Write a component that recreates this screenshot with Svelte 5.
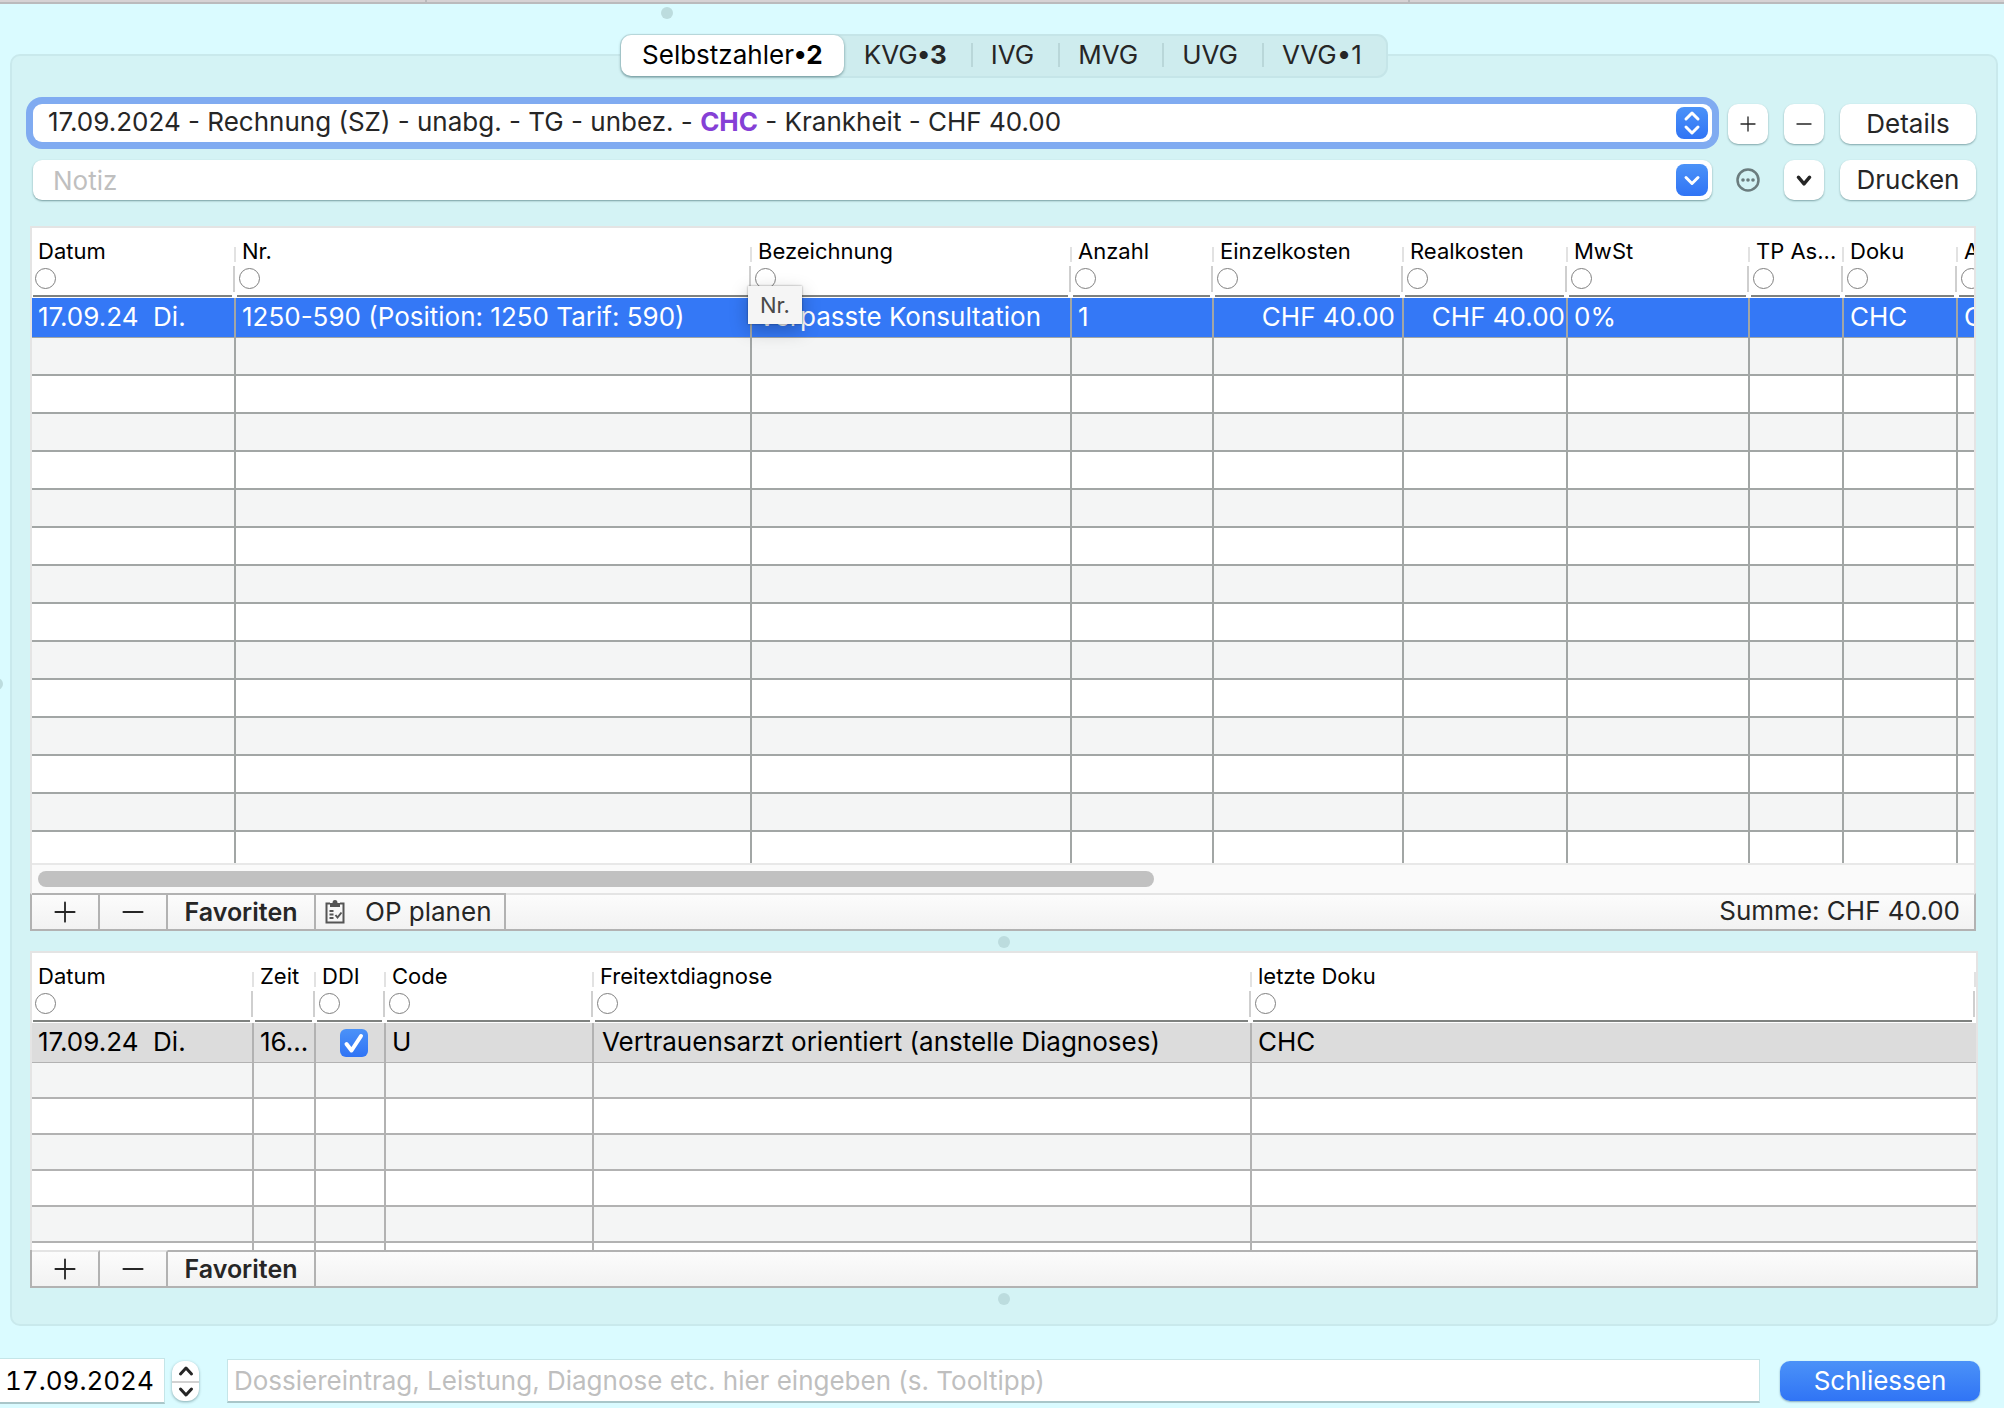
<script lang="ts">
	interface Column {
		label: string;
		width?: number;
		filter?: boolean;
		align?: 'end' | 'tight';
		tooltip?: string;
	}

	const tabs = [
		{ name: 'Selbstzahler', count: '2', strong: true },
		{ name: 'KVG', count: '3', strong: true },
		{ name: 'IVG' },
		{ name: 'MVG' },
		{ name: 'UVG' },
		{ name: 'VVG', count: '1' }
	];

	const positionColumns: Column[] = [
		{ label: 'Datum', width: 204 },
		{ label: 'Nr.', width: 516 },
		{ label: 'Bezeichnung', width: 320, tooltip: 'Nr.' },
		{ label: 'Anzahl', width: 142 },
		{ label: 'Einzelkosten', width: 190, align: 'end' },
		{ label: 'Realkosten', width: 164, align: 'tight' },
		{ label: 'MwSt', width: 182 },
		{ label: 'TP As...', width: 94 },
		{ label: 'Doku', width: 114 },
		{ label: 'A', width: 240 }
	];

	const position = [
		'17.09.24  Di.',
		'1250-590 (Position: 1250 Tarif: 590)',
		'Verpasste Konsultation',
		'1',
		'CHF 40.00',
		'CHF 40.00',
		'0%',
		'',
		'CHC',
		'C'
	];

	const diagnosisColumns: Column[] = [
		{ label: 'Datum', width: 222 },
		{ label: 'Zeit', width: 62, filter: false },
		{ label: 'DDI', width: 70 },
		{ label: 'Code', width: 208 },
		{ label: 'Freitextdiagnose', width: 658 },
		{ label: 'letzte Doku' }
	];

	let activeTab = $state('Selbstzahler');
	let note = $state('');
	let entry = $state('');
	let date = $state('17.09.2024');
	let ddi = $state(true);
</script>

{#snippet heading(columns: Column[])}
	<colgroup>
		{#each columns as column}
			<col style={column.width ? `width: ${column.width}px` : undefined} />
		{/each}
	</colgroup>
	<thead>
		<tr>
			{#each columns as column}
				<th scope="col">
					<span class="label">{column.label}</span>
					{#if column.filter !== false}
						<button class="filter" aria-label="{column.label} filtern"></button>
					{/if}
					{#if column.tooltip}
						<span class="tooltip" role="tooltip">{column.tooltip}</span>
					{/if}
				</th>
			{/each}
		</tr>
	</thead>
{/snippet}

{#snippet emptyRows(count: number, columns: Column[])}
	{#each { length: count } as _}
		<tr>
			{#each columns as _}<td></td>{/each}
		</tr>
	{/each}
{/snippet}

{#snippet plus()}
	<svg class="sign" viewBox="0 0 24 24" aria-hidden="true"><path d="M12 1.5v21M1.5 12h21" /></svg>
{/snippet}

{#snippet minus()}
	<svg class="sign" viewBox="0 0 24 24" aria-hidden="true"><path d="M1.5 12h21" /></svg>
{/snippet}

<div class="window">
	<div class="window-edge"><span></span><span></span><span></span></div>
	<div class="top-grip"><i class="dot"></i></div>
	<i class="dot side-dot"></i>

	<main class="panel">
		<div class="tabs" role="tablist">
			{#each tabs as tab}
				<button
					role="tab"
					class:active={activeTab === tab.name}
					aria-selected={activeTab === tab.name}
					onclick={() => (activeTab = tab.name)}
				>
					{tab.name}{#if tab.count}<span class:strong={tab.strong}>•{tab.count}</span>{/if}
				</button>
			{/each}
		</div>

		<div class="controls">
			<div class="invoice">
				<span class="invoice-text">17.09.2024 - Rechnung (SZ) - unabg. - TG - unbez. - <b>CHC</b> - Krankheit - CHF 40.00</span>
				<select aria-label="Rechnung">
					<option>17.09.2024 - Rechnung (SZ)</option>
				</select>
				<span class="chevrons">
					<svg viewBox="0 0 32 32" aria-hidden="true"><path d="M10 12l6-6 6 6M10 20l6 6 6-6" /></svg>
				</span>
			</div>
			<button class="push" aria-label="Rechnung hinzufügen">{@render plus()}</button>
			<button class="push" aria-label="Rechnung entfernen">{@render minus()}</button>
			<button class="push">Details</button>

			<div class="note">
				<input type="text" placeholder="Notiz" aria-label="Notiz" bind:value={note} />
				<button class="chevrons" aria-label="Notiz auswählen">
					<svg viewBox="0 0 32 32" aria-hidden="true"><path d="M10 13.5l6 6 6-6" /></svg>
				</button>
			</div>
			<button class="more" aria-label="Weitere Aktionen">
				<svg viewBox="0 0 24 24" aria-hidden="true">
					<circle class="ring" cx="12" cy="12" r="10.5" />
					<circle cx="7" cy="12" r="1.8" />
					<circle cx="12" cy="12" r="1.8" />
					<circle cx="17" cy="12" r="1.8" />
				</svg>
			</button>
			<button class="push" aria-label="Druckoptionen">
				<svg class="down" viewBox="0 0 16 16" aria-hidden="true"><path d="M3 5.5l5 6 5-6" /></svg>
			</button>
			<button class="push">Drucken</button>
		</div>

		<section class="positions" aria-label="Leistungen">
			<div class="grid">
				<table class="wide">
					{@render heading(positionColumns)}
					<tbody>
						<tr class="selected">
							{#each position as value, i}
								<td class={positionColumns[i].align}>{value}</td>
							{/each}
						</tr>
						{@render emptyRows(14, positionColumns)}
					</tbody>
				</table>
				<div class="scroll-track"><div class="scroll-thumb"></div></div>
			</div>
			<footer>
				<button aria-label="Leistung hinzufügen">{@render plus()}</button>
				<button aria-label="Leistung entfernen">{@render minus()}</button>
				<button class="favorites">Favoriten</button>
				<button class="plan">
					<svg viewBox="0 0 20 24" aria-hidden="true">
						<path d="M5 3.5H1.5v19h17v-19H15" />
						<path class="solid" d="M5 7V3h2.500a2.500 3 0 0 1 5 0H15v4z" />
						<path d="M4.500 11h4M4.500 14.500h4M4.500 18h4M10.500 15l2 2.500 4-5" />
					</svg>
					OP planen
				</button>
				<span class="sum">Summe: CHF 40.00</span>
			</footer>
		</section>

		<div class="grip"><i class="dot"></i></div>

		<section class="diagnoses" aria-label="Diagnosen">
			<div class="grid">
				<table>
					{@render heading(diagnosisColumns)}
					<tbody>
						<tr class="selected">
							<td>17.09.24  Di.</td>
							<td>16...</td>
							<td class="check">
								<label>
									<input type="checkbox" aria-label="DDI" bind:checked={ddi} />
									<svg viewBox="0 0 28 28" aria-hidden="true"><path d="M6.5 15l5 6.500L21 7" /></svg>
								</label>
							</td>
							<td>U</td>
							<td class="indent">Vertrauensarzt orientiert (anstelle Diagnoses)</td>
							<td>CHC</td>
						</tr>
						{@render emptyRows(6, diagnosisColumns)}
					</tbody>
				</table>
			</div>
			<footer>
				<button class="pale" aria-label="Diagnose hinzufügen">{@render plus()}</button>
				<button class="pale" aria-label="Diagnose entfernen">{@render minus()}</button>
				<button class="favorites">Favoriten</button>
			</footer>
		</section>

		<div class="grip last"><i class="dot"></i></div>
	</main>

	<form class="entry-bar" onsubmit={(e) => e.preventDefault()}>
		<input class="date" type="text" aria-label="Datum" bind:value={date} />
		<div class="stepper">
			<button type="button" aria-label="Später">
				<svg viewBox="0 0 16 12" aria-hidden="true"><path d="M2.5 9l5.500-6 5.500 6" /></svg>
			</button>
			<button type="button" aria-label="Früher">
				<svg viewBox="0 0 16 12" aria-hidden="true"><path d="M2.5 3l5.500 6 5.500-6" /></svg>
			</button>
		</div>
		<input
			class="entry"
			type="text"
			aria-label="Eintrag"
			placeholder="Dossiereintrag, Leistung, Diagnose etc. hier eingeben (s. Tooltipp)"
			bind:value={entry}
		/>
		<button class="close">Schliessen</button>
	</form>
</div>

<style>
	:global(body) {
		margin: 0;
		background: #dafbff;
	}

	.window {
		--line: #a2a6a5;
		--frame: #e4e4e4;
		--bar-line: #b2b2b2;
		position: relative;
		overflow: hidden;
		color: #262626;
		font-family: Inter, "Liberation Sans", sans-serif;
		font-size: 26px;
		line-height: 32px;
	}

	button,
	input,
	select {
		box-sizing: border-box;
		margin: 0;
		padding: 0;
		border: 0;
		background: none;
		color: inherit;
		font: inherit;
	}

	input:focus,
	button:focus {
		outline: none;
	}

	svg {
		display: block;
		fill: none;
		stroke: currentColor;
		stroke-linecap: round;
		stroke-linejoin: round;
	}

	.sign {
		width: 22px;
		height: 22px;
		stroke-width: 2;
	}

	.window-edge {
		display: grid;
		grid-template-columns: 425fr 983fr 596fr;
		height: 2px;
		background: #d6d2d4;
		border-bottom: 2px solid #bababc;
	}

	.window-edge span + span {
		border-left: 2px solid #bababc;
	}

	.dot {
		display: block;
		width: 12px;
		height: 12px;
		border-radius: 50%;
		background: #bcdcde;
	}

	.top-grip {
		display: flex;
		box-sizing: border-box;
		height: 50px;
		padding: 3px 0 0 33%;
	}

	.side-dot {
		position: absolute;
		top: 678px;
		left: -9px;
	}

	.panel {
		margin: 0 6px 0 10px;
		padding: 0 18px;
		background: #d4f3f5;
		border: 2px solid #c9e9ec;
		border-radius: 10px;
	}

	/* Tabs */
	.tabs {
		display: flex;
		width: max-content;
		box-sizing: border-box;
		height: 44px;
		margin: -22px auto 26px;
		background: #ceecee;
		border: 2px solid #c5e5e8;
		border-radius: 11px;
	}

	.tabs button {
		display: flex;
		align-items: center;
		padding: 0 24px 2px 0;
	}

	.tabs button:not(.active)::before {
		width: 2px;
		height: 24px;
		margin-right: 18px;
		background: #b9d7d9;
		content: "";
	}

	.tabs .active + button::before {
		background: transparent;
	}

	.tabs .active {
		margin: -1px 0 0 -1px;
		padding: 0 21px 1px;
		background: #fff;
		border-radius: 10px;
		box-shadow: 0 1px 3px rgba(0, 50, 55, 0.5);
		color: #000;
	}

	.tabs .strong {
		font-weight: 700;
	}

	/* Invoice and note */
	.controls {
		display: grid;
		grid-template-columns: 1fr 40px 40px 136px;
		gap: 16px;
		margin: 0 2px 26px 3px;
	}

	.invoice,
	.note {
		position: relative;
		display: flex;
		align-items: center;
		box-sizing: border-box;
		height: 40px;
		padding-right: 4px;
		background: #fff;
		border-radius: 9px;
	}

	.invoice {
		height: 38px;
		padding-left: 15px;
		box-shadow: 0 0 0 7px #80abf1;
	}

	.invoice-text {
		flex: 1;
		padding-bottom: 2px;
		white-space: nowrap;
	}

	.invoice b {
		color: #8540d6;
	}

	.invoice select {
		position: absolute;
		inset: 0;
		width: 100%;
		height: 100%;
		opacity: 0;
	}

	.note {
		box-shadow: 0 1px 2px rgba(0, 50, 55, 0.45);
	}

	.note input {
		flex: 1;
		min-width: 0;
		padding: 2px 0 0 20px;
	}

	input::placeholder {
		color: #bfbfbf;
		opacity: 1;
	}

	.chevrons {
		width: 32px;
		height: 32px;
		background: linear-gradient(#4b92f8, #3074f5);
		border-radius: 8px;
		color: #fff;
	}

	.chevrons svg {
		stroke-width: 3;
	}

	.push {
		display: flex;
		align-items: center;
		justify-content: center;
		height: 40px;
		padding-bottom: 1px;
		background: #fff;
		border-radius: 10px;
		box-shadow: 0 1px 2px rgba(0, 50, 55, 0.4);
	}

	.push .sign {
		width: 16px;
		height: 16px;
	}

	.down {
		width: 18px;
		height: 18px;
		stroke-width: 3;
	}

	.more {
		display: grid;
		place-items: center;
		color: #6b7c7e;
	}

	.more svg {
		width: 24px;
		height: 24px;
		fill: currentColor;
		stroke: none;
	}

	.more .ring {
		fill: none;
		stroke: currentColor;
		stroke-width: 2.5;
	}

	/* Tables */
	.positions {
		margin-right: 2px;
	}

	.grid {
		overflow: hidden;
		background: #fff;
		border: 2px solid var(--frame);
		border-bottom: 0;
	}

	table {
		width: 100%;
		table-layout: fixed;
		border-collapse: separate;
		border-spacing: 0;
	}

	table.wide {
		width: 2166px;
	}

	th {
		position: relative;
		box-sizing: border-box;
		height: 70px;
		padding: 7px 0 0 6px;
		color: #000;
		font-size: 22px;
		font-weight: 400;
		line-height: 32px;
		text-align: left;
		vertical-align: top;
		white-space: nowrap;
		background:
			linear-gradient(#e2e2e2, #e2e2e2) right 0 top 19px / 2px 15px no-repeat,
			linear-gradient(#cfcfcf, #cfcfcf) right 1px top 38px / 2px 26px no-repeat;
	}

	th::after {
		position: absolute;
		right: 4px;
		bottom: 1px;
		left: 1px;
		height: 2px;
		background: #7f8280;
		content: "";
	}

	.label {
		display: block;
	}

	.filter {
		display: block;
		width: 21px;
		height: 21px;
		margin: 1px 0 0 -3px;
		border: 1px solid #808080;
		border-radius: 50%;
	}

	.tooltip {
		position: absolute;
		top: 58px;
		left: -4px;
		z-index: 1;
		padding: 3px 12px;
		background: #f5f5f5;
		box-shadow: 0 0 2px rgba(0, 0, 0, 0.4), 0 6px 18px rgba(0, 0, 0, 0.25);
		color: #4a4a4a;
	}

	td {
		box-sizing: border-box;
		height: 38px;
		padding: 0 0 0 6px;
		overflow: hidden;
		border-right: 2px solid var(--line);
		border-bottom: 2px solid var(--line);
		white-space: pre;
	}

	tr:nth-child(even) td {
		background: #f4f5f5;
	}

	.selected td {
		height: 40px;
		padding-bottom: 2px;
		border-bottom-width: 1px;
	}

	.positions .selected td {
		background: #3478f6;
		color: #fff;
	}

	.positions tr:last-child td {
		height: 31px;
		border-bottom: 0;
	}

	.positions td.end,
	.positions td.tight {
		padding-right: 7px;
		text-align: right;
	}

	.positions td.tight {
		padding-right: 1px;
	}

	.diagnoses {
		--line: #b2b2b2;
	}

	.diagnoses td {
		height: 36px;
	}

	.diagnoses td:last-child {
		border-right: 0;
	}

	.diagnoses .selected td {
		height: 40px;
		background: #dcdcdc;
		color: #000;
	}

	.diagnoses tbody tr:last-child td {
		height: 7px;
		border-bottom: 0;
	}

	.diagnoses td.indent {
		padding-left: 8px;
	}

	.diagnoses td.check {
		padding-bottom: 0;
	}

	.check label {
		position: relative;
		display: block;
		width: 28px;
		height: 28px;
		margin-left: 18px;
	}

	.check input {
		display: block;
		width: 28px;
		height: 28px;
		appearance: none;
		background: #fff;
		border-radius: 6px;
	}

	.check input:checked {
		background: linear-gradient(#4b92f8, #3074f5);
	}

	.check svg {
		position: absolute;
		inset: 0;
		color: #fff;
		stroke-width: 4;
		pointer-events: none;
	}

	.scroll-track {
		padding: 6px;
		background: #fafafa;
		border-top: 2px solid #e8e8e8;
	}

	.scroll-thumb {
		width: 57.8%;
		height: 16px;
		background: #c1c1c1;
		border-radius: 8px;
	}

	footer {
		display: flex;
		box-sizing: border-box;
		height: 38px;
		background: linear-gradient(#fcfcfc, #f2f2f2);
		border: 2px solid var(--bar-line);
		border-top-color: var(--frame);
	}

	.diagnoses footer {
		border-top-color: var(--bar-line);
	}

	footer button {
		display: flex;
		align-items: center;
		justify-content: center;
		width: 68px;
		margin-top: -2px;
		border-top: 2px solid var(--bar-line);
		border-right: 2px solid var(--bar-line);
	}

	footer .pale {
		border-top-color: var(--frame);
	}

	footer .favorites {
		width: 148px;
		font-size: 25px;
		font-weight: 600;
	}

	footer .plan {
		justify-content: flex-start;
		gap: 20px;
		width: 190px;
		padding-left: 9px;
	}

	.plan svg {
		width: 20px;
		height: 24px;
		color: #555;
		stroke-width: 2;
		stroke-linecap: butt;
		stroke-linejoin: miter;
	}

	.plan .solid {
		fill: currentColor;
		stroke: none;
	}

	.sum {
		margin-left: auto;
		padding-right: 14px;
	}

	.grip {
		display: flex;
		justify-content: center;
		box-sizing: border-box;
		height: 20px;
		padding-top: 5px;
	}

	.grip.last {
		height: 36px;
	}

	/* Entry bar */
	.entry-bar {
		display: flex;
		align-items: center;
		padding: 32px 24px 4px 0;
	}

	.date,
	.entry {
		height: 46px;
		background: #fff;
		border: 1px solid #c5e5e8;
		border-bottom: 2px solid #a9c6c9;
	}

	.date {
		width: 165px;
		padding-left: 5px;
		border-left: 0;
		color: #000;
		font-variant-numeric: tabular-nums;
	}

	.entry {
		flex: 1;
		height: 44px;
		margin: 0 20px 0 28px;
		padding-left: 6px;
	}

	.stepper {
		width: 27px;
		margin-left: 7px;
		background: #fff;
		border-radius: 12px;
		box-shadow: 0 1px 3px rgba(0, 50, 55, 0.4);
	}

	.stepper button {
		display: grid;
		place-items: center;
		width: 27px;
		height: 20px;
	}

	.stepper button + button {
		border-top: 2px solid #d2d2d2;
	}

	.stepper svg {
		width: 16px;
		height: 12px;
		stroke-width: 3;
	}

	.close {
		width: 200px;
		height: 40px;
		background: linear-gradient(#4b92f8, #3074f5);
		border-radius: 10px;
		box-shadow: 0 1px 2px rgba(0, 50, 90, 0.4);
		color: #fff;
	}
</style>
